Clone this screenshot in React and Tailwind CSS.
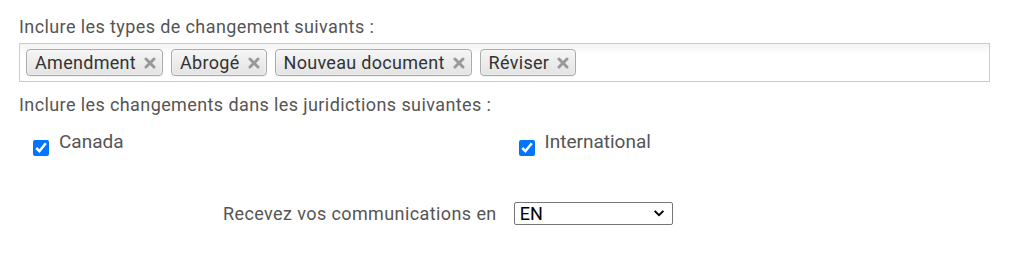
import React from "react";

const types = ["Amendment", "Abrogé", "Nouveau document", "Réviser"];

const Tag = ({ label }) => (
  <span className="flex h-[27px] items-center gap-[8px] rounded-[4px] border border-[#aaa] bg-gradient-to-b from-[#f6f6f6] to-[#e3e3e3] pl-[8px] pr-[6px] text-[18px] leading-[22px] tracking-[0.3px] text-[#333] shadow-[0_0_2px_#fff_inset,0_1px_0_rgba(0,0,0,0.05)]">
    <span>{label}</span>
    <svg viewBox="0 0 12 12" className="h-[12px] w-[12px]" stroke="#999" strokeWidth="3" strokeLinecap="round">
      <path d="M2 2l8 8M10 2l-8 8" />
    </svg>
  </span>
);

const Check = ({ label }) => (
  <label className="flex items-start gap-[10px] pl-[14px]">
    <input type="checkbox" defaultChecked className="mt-[12px] h-[16px] w-[16px] accent-[#0075ff]" />
    <span className="mt-[2px] text-[19px] leading-[24px]">{label}</span>
  </label>
);

export default function App() {
  return (
    <div className="w-[1027px] bg-white pt-[16px] font-['Roboto',sans-serif] text-[18px] leading-[22px] text-[#555]">
      <div className="mr-[37px] ml-[19px]">
        <p className="tracking-[0.4px]">Inclure les types de changement suivants :</p>
        <div className="mt-[5px] flex h-[39px] items-center gap-[8px] border border-[#ccc] bg-gradient-to-b from-[#f4f4f4] to-white to-[30%] px-[6px]">
          {types.map((t) => (
            <Tag key={t} label={t} />
          ))}
        </div>
        <p className="mt-[12px] tracking-[0.4px]">Inclure les changements dans les juridictions suivantes :</p>
        <div className="mt-[12px] grid grid-cols-2">
          <Check label="Canada" />
          <Check label="International" />
        </div>
        <div className="mt-[46px] flex items-center gap-[17px] pl-[204px]">
          <span className="tracking-[0.4px]">Recevez vos communications en</span>
          <div className="relative">
            <select className="block h-[23px] w-[159px] appearance-none rounded-[2px] border border-[#767676] bg-white pl-[5px] text-[18px] leading-[20px] text-black">
              <option>EN</option>
              <option>FR</option>
            </select>
            <svg viewBox="0 0 12 8" className="pointer-events-none absolute top-[8px] right-[8px] h-[7px] w-[12px]" fill="none" stroke="#000" strokeWidth="2.2">
              <path d="M1 1l5 5 5-5" />
            </svg>
          </div>
        </div>
      </div>
    </div>
  );
}
